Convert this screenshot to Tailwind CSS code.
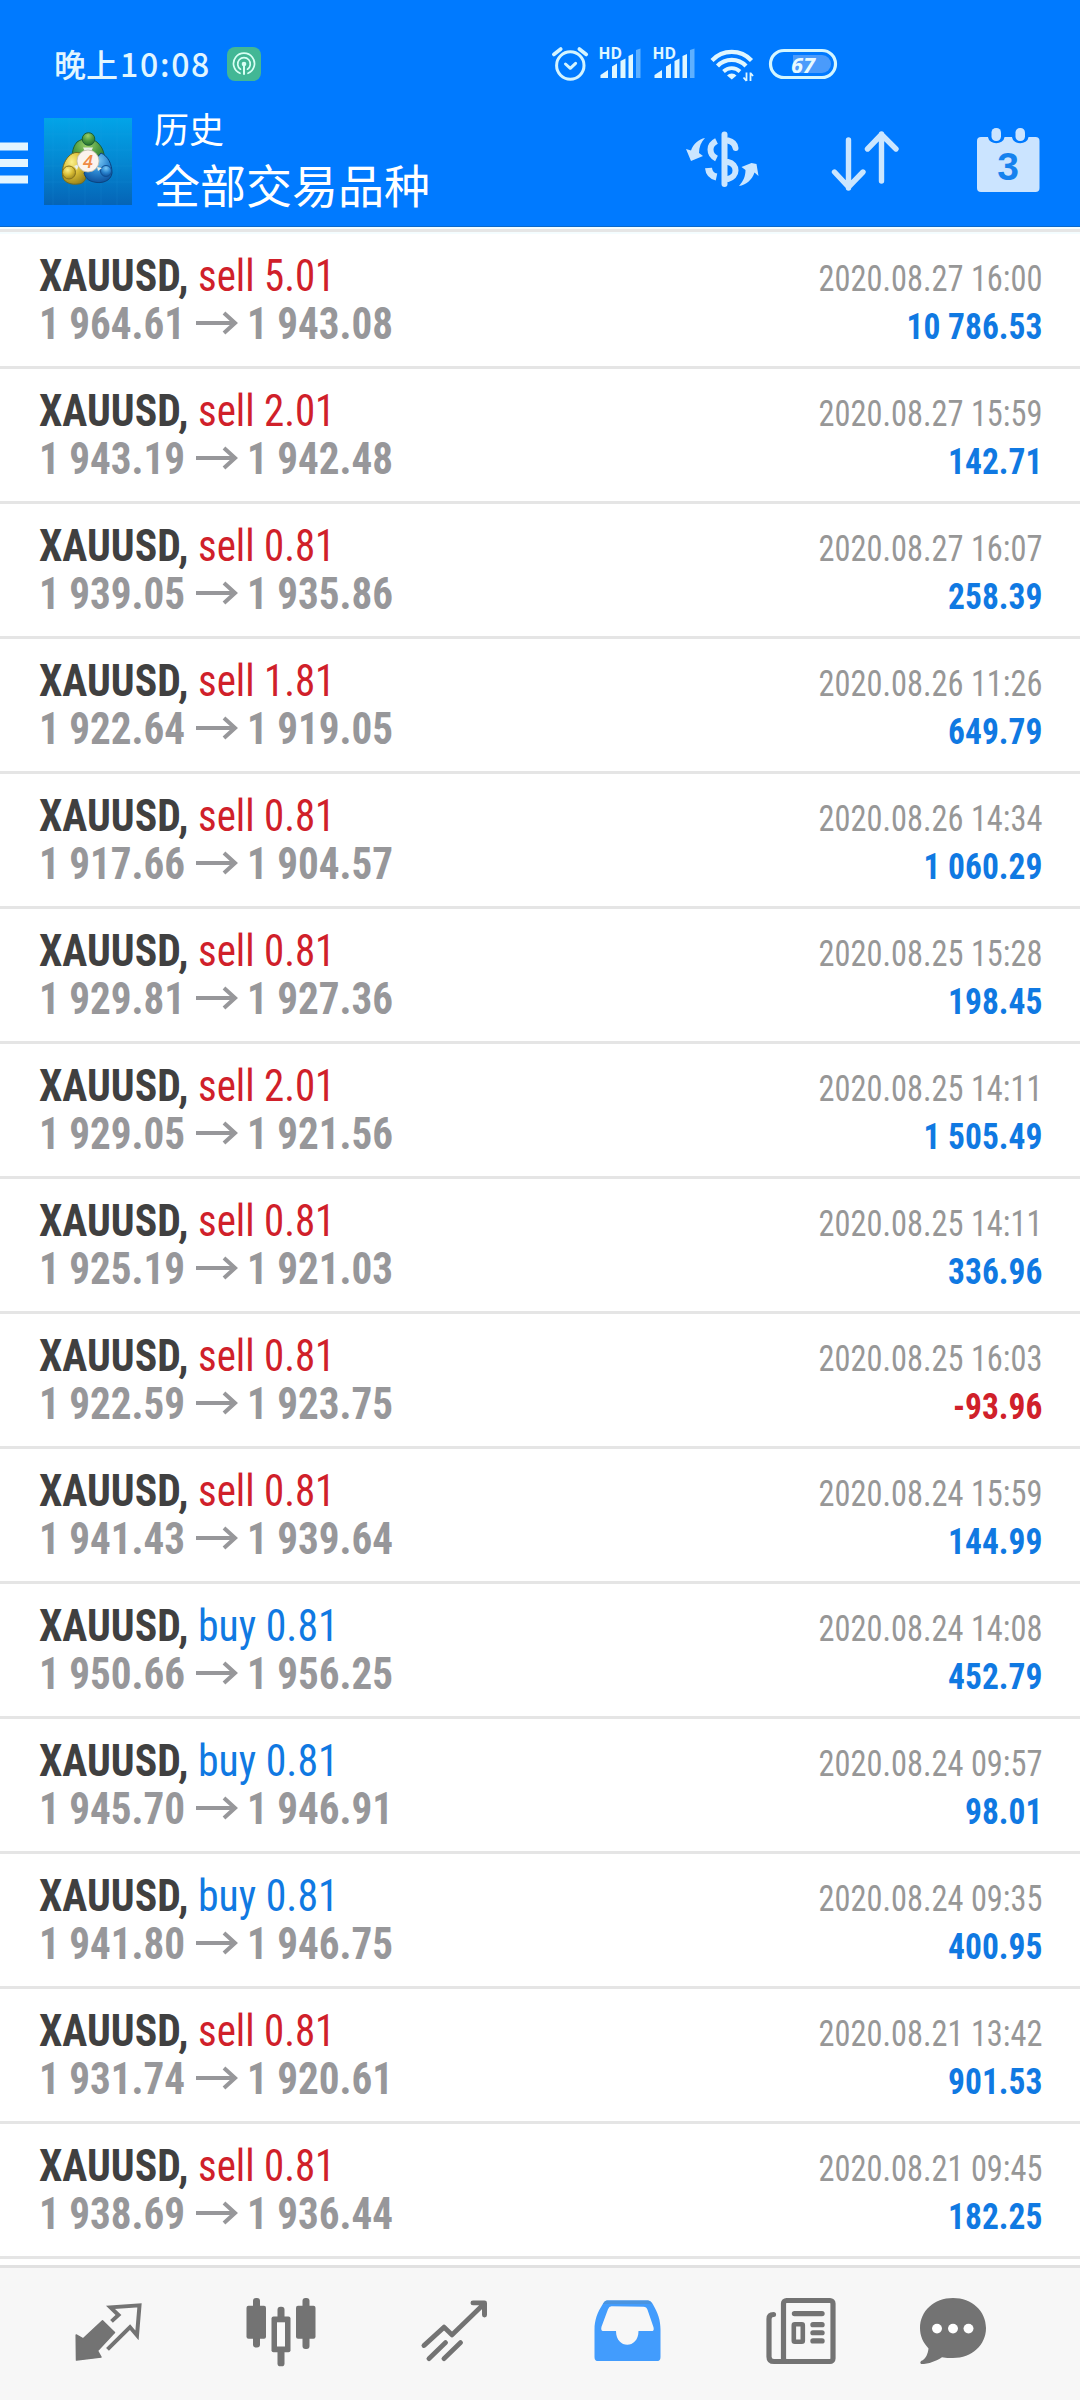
<!DOCTYPE html>
<html lang="zh-CN">
<head>
<meta charset="utf-8">
<title>历史</title>
<script src="https://cdn.jsdelivr.net/npm/@tailwindcss/browser@4"></script>
</head>
<body class="bg-white">
<div class="w-[1080px] h-[2400px] flex flex-col overflow-hidden bg-white">
  <header class="h-[227px] shrink-0 flex flex-col bg-[#007aff] border-b border-[#0a68c8] text-white font-['Noto_Sans_CJK_SC',sans-serif]">
    <div class="h-[100px] pt-[30px] flex items-start text-[#e2f6ff]">
      <div class="ml-[54px] w-[173px] h-[68px] leading-[66px] text-[32px] font-medium whitespace-nowrap flex"><span>晚上</span><span class="ml-[2px] tracking-[1.7px]">10:08</span></div>
      <svg class="h-[70px] w-[34px]" viewBox="227 30 34 70" fill="none">
        <rect x="227" y="47" width="34" height="34" rx="8" fill="#42b795"/>
        <g stroke="#d8fff4" stroke-width="1.7" stroke-linecap="round">
          <path d="M240 73.3A10.5 10.5 0 1 1 248 73.3"/>
          <path d="M240.5 69.2A6.3 6.3 0 1 1 247.5 69.2"/>
          <path d="M244 64v10" stroke-width="2"/>
        </g>
        <circle cx="244" cy="64" r="2.3" fill="#d8fff4"/>
      </svg>
      <svg class="ml-[289px] h-[70px] w-[290px]" viewBox="550 30 290 70" fill="none">
        <g stroke="#d4f4ff" stroke-width="3" stroke-linecap="round" stroke-linejoin="round">
          <circle cx="570.3" cy="65.5" r="13.7"/>
          <path d="M565.5 64l4.800 4.300 5.300-5"/>
          <path d="M553.800 54.500l7-5.500M586.300 54.500l-7-5.500" stroke-width="3.600"/>
        </g>
        <g fill="#e0f7ff">
          <path d="M600.500 78v-3l7.500-5v8zM612 66.500l5-3v14.500h-5zM620.500 61l5-2.500v19.500h-5zM628.500 56l4.500-2v24h-4.500z" />
          <path d="M654.500 78v-3l7.500-5v8zM666 66.500l5-3v14.500h-5zM674.500 61l5-2.500v19.500h-5zM682.500 56l4.500-2v24h-4.500z"/>
        </g>
        <g fill="#5eb0ff"><path d="M636 50l4.500-1.500v29.500h-4.500zM690 50l4.500-1.500v29.500h-4.500z"/></g>
        <g fill="#e0f7ff" font-family="Open Sans, sans-serif" font-size="15.500" font-weight="700"><text x="598.500" y="59" textLength="23.500" lengthAdjust="spacingAndGlyphs">HD</text><text x="652.500" y="59" textLength="23.500" lengthAdjust="spacingAndGlyphs">HD</text></g>
        <g stroke="#e0f7ff" stroke-width="4.200">
          <path d="M712 60.500a27 27 0 0 1 39.500 0"/>
          <path d="M717.500 66a19.500 19.500 0 0 1 28.500 0"/>
          <path d="M723.500 71.500a12 12 0 0 1 16.500 0" stroke-width="3.800"/>
        </g>
        <path d="M727 75.500a6.500 6.500 0 0 1 9.500 0l-4.700 4z" fill="#e0f7ff"/>
        <path d="M746.500 81v-8.500M746.500 81l-3-3.500M750.500 72.500V81M750.500 73l2.500 3" stroke="#e0f7ff" stroke-width="1.800"/>
        <rect x="770.500" y="50.500" width="65" height="27" rx="13.500" stroke="#d4f6ff" stroke-width="3.200"/>
        <path d="M793 55h29a9 9 0 0 1 9 9a9 9 0 0 1-9 9H793z" fill="#4a9bfb"/>
        <text x="791" y="72.500" font-family="Open Sans, sans-serif" font-size="22" font-weight="700" font-style="italic" textLength="24" lengthAdjust="spacingAndGlyphs" fill="#e8faff">67</text>
      </svg>
    </div>
    <div class="h-[126px] flex">
      <svg class="w-[28px] h-[126px]" viewBox="0 100 28 126" fill="#e4f5ff"><path d="M0 142.500h28v8H0zM0 159h28v8H0zM0 175.500h28v8H0z"/></svg>
      <svg class="ml-4 w-[88px] h-[126px]" viewBox="44 100 88 126">
        <defs>
          <linearGradient id="bg" x1="0" y1="0" x2="0" y2="1"><stop offset="0" stop-color="#02a4e8"/><stop offset=".5" stop-color="#0488d2"/><stop offset="1" stop-color="#0564b6"/></linearGradient>
          <radialGradient id="gr" cx=".45" cy=".25" r=".8"><stop offset="0" stop-color="#9bd06a"/><stop offset=".5" stop-color="#4d9a42"/><stop offset="1" stop-color="#1c6a2c"/></radialGradient>
          <radialGradient id="ye" cx=".4" cy=".3" r=".8"><stop offset="0" stop-color="#fbf08a"/><stop offset=".5" stop-color="#d8bc35"/><stop offset="1" stop-color="#8f7a18"/></radialGradient>
          <radialGradient id="bl" cx=".5" cy=".25" r=".8"><stop offset="0" stop-color="#7cc9f5"/><stop offset=".5" stop-color="#2b86d0"/><stop offset="1" stop-color="#0c4d98"/></radialGradient>
        </defs>
        <rect x="44" y="118" width="88" height="87" fill="url(#bg)"/>
        <path d="M53 118v87M69 118v87M85 118v87M101 118v87M117 118v87M44 134h88M44 150h88M44 166h88M44 182h88" stroke="#2fb0ea" stroke-opacity=".12" stroke-width="1"/>
        <g stroke-width="1">
          <path d="M77 142c7-5 16-4 21 1 5 5 7 11 6 18l-30 3c-3-8-2-16 3-22z" fill="url(#gr)" stroke="#1d5f35"/>
          <path d="M69 156c4-4 10-5 14-1l3 21c0 4-3 8-8 8-6 1-13-1-15-6-2-9 1-17 6-22z" fill="url(#ye)" stroke="#6e6a22"/>
          <path d="M101 153c7 3 11 11 11 20-1 8-10 11-18 9-6-1-9-5-10-9z" fill="url(#bl)" stroke="#0b437f"/>
          <circle cx="88.500" cy="139" r="6.300" fill="url(#gr)" stroke="#1d5f35"/>
          <circle cx="69" cy="172.500" r="6.500" fill="url(#ye)" stroke="#84701e"/>
          <circle cx="106" cy="171" r="5.500" fill="url(#bl)" stroke="#104f94"/>
        </g>
        <path d="M83 147.500h10l-2 4h-6zM74 166l5-2-2 6zM97 167l5 1-4 3z" fill="#e8f0e8"/>
        <circle cx="88" cy="161" r="11" fill="#fbf3ee" stroke="#bdb9a8" stroke-width=".8"/>
        <text x="88" y="167.500" text-anchor="middle" font-family="Open Sans, sans-serif" font-style="italic" font-weight="600" font-size="18" fill="#ef8a45">4</text>
      </svg>
      <div class="ml-[22px] w-[500px] pt-[3px] flex flex-col">
        <div class="h-[49px] leading-[50px] text-[35px]">历史</div>
        <div class="h-[62px] leading-[62px] text-[46px]">全部交易品种</div>
      </div>
      <svg class="w-[406px] h-[126px]" viewBox="654 100 406 126" fill="none" stroke="#cbe6ff" stroke-width="6" stroke-linecap="round" stroke-linejoin="round">
        <path d="M724.500 134.500V184"/>
        <path d="M728 140.500c4 1 7 3.500 7.500 7.500" />
        <path d="M716.500 141c-4 2-6 5-6 8.500s2 7 6 9" stroke-linecap="butt"/>
        <path d="M708.500 168c.5 5 3.500 8 8 9" stroke-linecap="butt" stroke-width="7"/>
        <path d="M728 162c5 1 7.500 4.500 7.500 8.500s-3 7.500-7.500 8.500"/>
        <g fill="#cbe6ff" stroke="none">
          <path d="M705 138c-6 1-12 6-14 12.500l-5-1.500 5 12 12-5-4-3c0-6 2-11 6-15z"/>
          <path d="M739 186c7-1 13-6 15.500-13.500l4 3.500-2-12-5-1-10 4 4 3c0 6-2 11-6.500 16z"/>
        </g>
        <path d="M848.500 140v48M834.500 172l14 15 14.500-15M881.500 181v-47M867.500 149l14-14.500 14.500 14.500" stroke-width="5.400"/>
        <g stroke="none">
          <rect x="977" y="137" width="62.500" height="55" rx="4" fill="#cbe4ff"/>
          <path d="M989 137h14.500c-1 7-13.500 7-14.500 0zM1013 137h14.500c-1 7-13.500 7-14.500 0z" fill="#007aff" stroke="#007aff" stroke-width="2"/>
          <rect x="991.500" y="128" width="9.500" height="13" rx="4.500" fill="#cbe4ff"/>
          <rect x="1015.500" y="128" width="9.500" height="13" rx="4.500" fill="#cbe4ff"/>
          <text x="1008" y="180" text-anchor="middle" font-family="Liberation Sans, sans-serif" font-weight="700" font-size="39" fill="#1682ee">3</text>
        </g>
      </svg>
    </div>
  </header>
  <div class="h-[7px] shrink-0 pt-[2px] bg-[#f4fdff]"><div class="h-[3px] bg-[#e6e6e6]"></div></div>
  <main id="list" class="h-[2031px] shrink-0 flex flex-col font-[Roboto,sans-serif] font-stretch-condensed"></main>
  <nav class="h-[135px] shrink-0 border-t-[3px] border-[#e1e1e1] bg-[#f7f7f7]">
    <svg class="w-[1080px] h-[132px]" viewBox="0 2268 1080 132" fill="none" stroke="#737373" stroke-linecap="round" stroke-linejoin="round">
      <g transform="matrix(1 0 0 .968 0 71.700)">
        <g>
          <path d="M102.500 2323.500l12 12-17 19 3.500 6.500-24.500 3-.3-26 7 4z" fill="#737373" stroke-width="1.500"/>
          <path d="M111.500 2324l7-6.500-8-8 29-2-2.500 31-7-8.500-22.500 23" stroke-width="4" stroke-linecap="butt" stroke-linejoin="miter"/>
        </g>
        <g fill="#737373" stroke="none">
          <rect x="253" y="2300" width="7" height="51" rx="3"/><rect x="246.500" y="2308" width="19.500" height="34" rx="2"/>
          <rect x="302.500" y="2300" width="7" height="52.500" rx="3"/><rect x="296" y="2308" width="19.500" height="34" rx="2"/>
          <rect x="277.500" y="2309" width="7" height="61.500" rx="3"/><rect x="271.500" y="2319" width="19" height="37" rx="2"/><rect x="277" y="2325" width="8" height="25" fill="#f9f9f9"/>
        </g>
        <path d="M424 2349l20-19 8 8 32-32M473 2305h11.500v12.500M429 2362.500l16.500-16.500M444 2362.500l16.500-16.500" stroke-width="5"/>
        <path fill-rule="evenodd" stroke="none" fill="#429cfd" d="M607 2302.500h41q3 0 5 4c5 9 7.500 16 7.500 26v28.500q0 4-4 4h-58q-4 0-4-4v-28.500c0-10 3-18 8-26q2-4 4.500-4zM611.500 2308.500q-2.500 0-3.500 3l-6.500 18q-1 4 1.500 4.500h13c0 19 22.500 19 22.500 0h13q3 0 2-4l-6-18q-1-3-4-3z"/>
        <path d="M648 2302.500H607q-2 0-4 3.500l49 0q-2-3.500-4-3.500z" stroke="none" fill="#4a94e0"/>
        <g stroke-width="5.200">
          <rect x="783.500" y="2302.500" width="49.500" height="63" rx="3"/>
          <path d="M773.500 2317q-4.500 0-4.500 4.500v39q0 5 5 5h12"/>
          <path d="M794.500 2316h27.500M813 2327.500h9M813 2335.800h9M813 2344.200h9" stroke-width="5.400"/>
          <rect x="793.800" y="2327" width="9" height="18" rx="1" stroke-width="4.600"/>
        </g>
        <path d="M953 2300c19 0 33 13.500 33 31s-14 31-33 31q-6 0-11-1c-6 4-13 7-21 7q-1.500-1 0-3c5-2 7-8 7.500-13-5.500-6-8.500-13-8.500-21 0-17.500 14-31 33-31z" fill="#737373" stroke="none"/>
        <g fill="#fff" stroke="none"><circle cx="937" cy="2331.500" r="5"/><circle cx="953" cy="2331.500" r="5"/><circle cx="968.500" cy="2331.500" r="5"/></g>
      </g>
    </svg>
  </nav>
</div>
<script>
const trades = [
  ['sell 5.01', '1 964.61', '1 943.08', '2020.08.27 16:00', '10 786.53'],
  ['sell 2.01', '1 943.19', '1 942.48', '2020.08.27 15:59', '142.71'],
  ['sell 0.81', '1 939.05', '1 935.86', '2020.08.27 16:07', '258.39'],
  ['sell 1.81', '1 922.64', '1 919.05', '2020.08.26 11:26', '649.79'],
  ['sell 0.81', '1 917.66', '1 904.57', '2020.08.26 14:34', '1 060.29'],
  ['sell 0.81', '1 929.81', '1 927.36', '2020.08.25 15:28', '198.45'],
  ['sell 2.01', '1 929.05', '1 921.56', '2020.08.25 14:11', '1 505.49'],
  ['sell 0.81', '1 925.19', '1 921.03', '2020.08.25 14:11', '336.96'],
  ['sell 0.81', '1 922.59', '1 923.75', '2020.08.25 16:03', '-93.96'],
  ['sell 0.81', '1 941.43', '1 939.64', '2020.08.24 15:59', '144.99'],
  ['buy 0.81', '1 950.66', '1 956.25', '2020.08.24 14:08', '452.79'],
  ['buy 0.81', '1 945.70', '1 946.91', '2020.08.24 09:57', '98.01'],
  ['buy 0.81', '1 941.80', '1 946.75', '2020.08.24 09:35', '400.95'],
  ['sell 0.81', '1 931.74', '1 920.61', '2020.08.21 13:42', '901.53'],
  ['sell 0.81', '1 938.69', '1 936.44', '2020.08.21 09:45', '182.25'],
];
document.getElementById('list').innerHTML = trades.map(([side, open, close, time, profit]) => `
  <div class="h-[135px] shrink-0 border-b-[3px] border-[#e5e5e5] pl-[39px] pr-[38px] flex justify-between whitespace-nowrap">
    <div class="pt-[19px] text-[43.5px] leading-12">
      <div class="flex"><span class="w-[159px] origin-left scale-x-[.96] font-bold text-[#404040]">XAUUSD,</span><span class="origin-left ${side.startsWith('buy') ? 'scale-x-[.96] text-[#1079e2]' : 'scale-x-[.94] text-[#d0202a]'}">${side}</span></div>
      <div class="flex font-bold text-[#97979a]"><span class="w-[157px] origin-left scale-x-[.945]">${open}</span><svg class="w-[42px] h-12 mr-[9px]" viewBox="0 0 42 48" fill="none" stroke="#97979a" stroke-width="4"><path d="M0 22h39M28 12l11 10-11 10"/></svg><span class="origin-left scale-x-[.945]">${close}</span></div>
    </div>
    <div class="pt-[21px] text-[36.5px] leading-12 text-right">
      <div class="origin-right scale-x-[.887] text-[#979797]">${time}</div>
      <div class="origin-right scale-x-[.917] font-bold ${profit.startsWith('-') ? 'text-[#d0202a]' : 'text-[#1079e2]'}">${profit}</div>
    </div>
  </div>`).join('');
</script>
</body>
</html>
